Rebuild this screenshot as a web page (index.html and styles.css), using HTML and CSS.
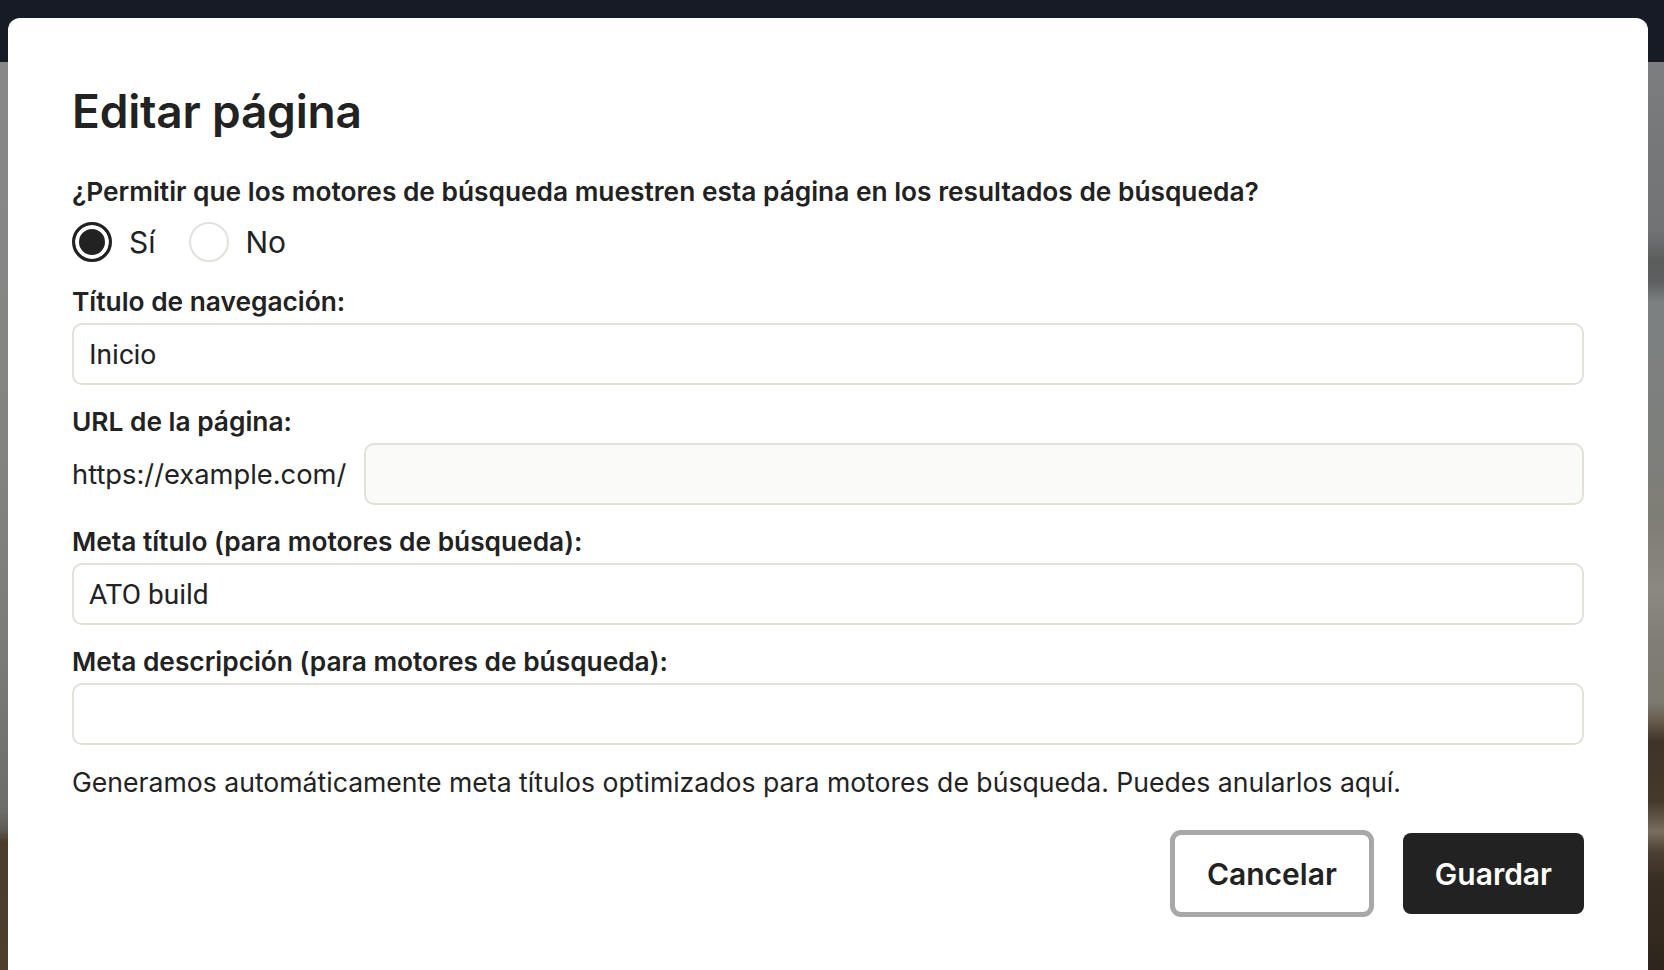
FILE: index.html
```html
<!DOCTYPE html>
<html lang="es">
<head>
    <meta charset="UTF-8">
    <meta name="viewport" content="width=device-width, initial-scale=1.0">
    <title>Editar página</title>
    <link rel="stylesheet" href="styles.css">
</head>
<body>
    <!-- Page behind the dialog, dimmed -->
    <div class="page">
        <header class="topbar"></header>
        <div class="backdrop">
            <div class="stripe stripe-left"></div>
            <div class="stripe stripe-right"></div>
        </div>
    </div>

    <!-- Edit page dialog -->
    <div class="modal">
        <h1>Editar página</h1>

        <form class="form" onsubmit="return false">
            <fieldset class="field field-radios">
                <legend class="field-label">¿Permitir que los motores de búsqueda muestren esta página en los resultados de búsqueda?</legend>
                <div class="radios">
                    <label class="radio"><input type="radio" name="indexable" checked> <span>Sí</span></label>
                    <label class="radio"><input type="radio" name="indexable"> <span>No</span></label>
                </div>
            </fieldset>

            <label class="field">
                <span class="field-label">Título de navegación:</span>
                <input class="text-input" type="text" value="Inicio">
            </label>

            <div class="field">
                <label class="field-label" for="slug">URL de la página:</label>
                <div class="url-row">
                    <span class="url-prefix">https://example.com/</span>
                    <input class="text-input text-input-muted" id="slug" type="text" value="">
                </div>
            </div>

            <label class="field">
                <span class="field-label">Meta título (para motores de búsqueda):</span>
                <input class="text-input" type="text" value="ATO build">
            </label>

            <label class="field">
                <span class="field-label">Meta descripción (para motores de búsqueda):</span>
                <input class="text-input" type="text" value="">
            </label>

            <p class="hint">Generamos automáticamente meta títulos optimizados para motores de búsqueda. Puedes anularlos aquí.</p>

            <div class="actions">
                <button class="btn btn-outline" type="button">Cancelar</button>
                <button class="btn btn-dark" type="submit">Guardar</button>
            </div>
        </form>
    </div>
</body>
</html>
```

FILE: styles.css
```css
/* Base */
html, body {
    height: 100%;
}
body {
    margin: 0;
    overflow: hidden;
    font-family: Inter, "Noto Sans", sans-serif;
    color: #222222;
    background-color: #7b7b7b;
}

/* Dimmed page behind the dialog */
.page {
    display: flex;
    flex-direction: column;
    height: 100%;
}
.topbar {
    height: 62px;
    background-color: #161b26;
}
.backdrop {
    flex: 1;
    display: flex;
    justify-content: space-between;
    background-color: #7b7b7b;
}
.stripe-left {
    width: 8px;
    background: linear-gradient(to bottom,
        #888888 0px, #838382 400px, #7a7a77 600px, #6c6c68 750px,
        #5e5a52 768px, #4a3b2c 780px, #4d3e2e 908px);
}
.stripe-right {
    width: 16px;
    background: linear-gradient(to bottom,
        #7c7d7e 0px, #717273 170px, #5b5c5c 200px, #5e6061 220px,
        #7c8081 240px, #7d7f7c 380px, #7f7d74 460px, #8a8880 530px,
        #7f7d74 580px, #7d7a70 640px,
        #655a4c 660px, #3f3226 680px, #463a2d 740px, #7a6e60 770px,
        #4b3f32 790px, #382d22 820px, #2e261d 908px);
}

/* Dialog */
.modal {
    position: absolute;
    top: 18px;
    left: 8px;
    right: 16px;
    bottom: -40px;
    box-sizing: border-box;
    padding: 65px 64px 0;
    background-color: #fff;
    border-radius: 12px;
}
.modal h1 {
    margin: 0 0 37px;
    font-size: 46px;
    line-height: 56px;
    font-weight: 600;
    letter-spacing: -0.2px;
}

/* Form */
.form {
    display: flex;
    flex-direction: column;
}
.field {
    display: flex;
    flex-direction: column;
    margin: 0 0 21px;
    padding: 0;
    border: 0;
    min-width: 0;
}
.field-label {
    display: block;
    margin-bottom: 5px;
    padding: 0;
    font-size: 26.3px;
    line-height: 32px;
    font-weight: 600;
}
.field-radios {
    margin-bottom: 24px;
}
.field-radios .field-label {
    margin-bottom: 14px;
}
.radios {
    display: flex;
    gap: 33px;
}
.radio {
    display: flex;
    align-items: center;
    gap: 17px;
    height: 40px;
    font-size: 30px;
    cursor: pointer;
}
.radio input {
    appearance: none;
    -webkit-appearance: none;
    box-sizing: border-box;
    width: 40px;
    height: 40px;
    margin: 0;
    border: 2px solid #e4e1da;
    border-radius: 50%;
    background-color: #fff;
}
.radio input:checked {
    border: 3px solid #222;
    background-color: #222;
    box-shadow: inset 0 0 0 4px #fff;
}

.text-input {
    box-sizing: border-box;
    width: 100%;
    height: 62px;
    padding: 0 15px;
    border: 2px solid #e3e0d8;
    border-radius: 10px;
    background-color: #fff;
    font-family: Roboto, "Liberation Sans", sans-serif;
    font-size: 28px;
    color: #222;
    outline: none;
}
.text-input-muted {
    background-color: #fafaf8;
}
.url-row {
    display: flex;
    align-items: center;
    gap: 18px;
}
.url-prefix {
    flex: none;
    font-size: 27.3px;
}
.url-row .text-input {
    flex: 1;
}

.hint {
    margin: 0;
    font-size: 26.6px;
    line-height: 32px;
}

/* Buttons */
.actions {
    display: flex;
    justify-content: flex-end;
    gap: 32px;
    margin-top: 35px;
}
.btn {
    height: 81px;
    padding: 0 32px;
    border-radius: 8px;
    font-family: Inter, "Noto Sans", sans-serif;
    font-size: 30px;
    font-weight: 600;
    cursor: pointer;
}
.btn-outline {
    background-color: #fff;
    color: #222;
    border: 2px solid #a8a8a8;
    box-shadow: 0 0 0 3px #a8a8a8;
}
.btn-dark {
    background-color: #222;
    color: #fff;
    border: 0;
}
```
